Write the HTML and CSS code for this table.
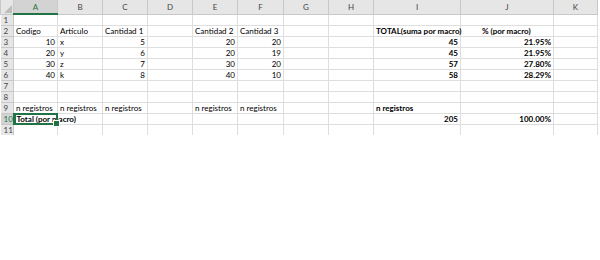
FILE: index.html
```html
<!DOCTYPE html>
<html lang="es">
<head>
    <meta charset="UTF-8">
    <title>Libro1 - Hoja1</title>
    <link rel="stylesheet" href="styles.css">
</head>
<body>

    <!-- Sheet grid -->
    <table class="sheet">
        <colgroup>
            <col class="c-head">
            <col class="c-44"><col class="c-45"><col class="c-45"><col class="c-45">
            <col class="c-45"><col class="c-46"><col class="c-45"><col class="c-45">
            <col class="c-87"><col class="c-93"><col class="c-44">
        </colgroup>
        <thead>
            <tr class="col-heads">
                <th class="corner"></th>
                <th class="active-col">A</th><th>B</th><th>C</th><th>D</th><th>E</th><th>F</th>
                <th>G</th><th>H</th><th>I</th><th>J</th><th>K</th>
            </tr>
        </thead>
        <tbody>
            <tr><th>1</th><td></td><td></td><td></td><td></td><td></td><td></td><td></td><td></td><td></td><td></td><td></td></tr>
            <tr><th>2</th><td>Codigo</td><td>Artículo</td><td>Cantidad 1</td><td></td><td>Cantidad 2</td><td>Cantidad 3</td><td></td><td></td><td class="b">TOTAL(suma por macro)</td><td class="b pct-head">% (por macro)</td><td></td></tr>
            <tr><th>3</th><td class="n">10</td><td>x</td><td class="n">5</td><td></td><td class="n">20</td><td class="n">20</td><td></td><td></td><td class="n b">45</td><td class="n b">21.95%</td><td></td></tr>
            <tr><th>4</th><td class="n">20</td><td>y</td><td class="n">6</td><td></td><td class="n">20</td><td class="n">19</td><td></td><td></td><td class="n b">45</td><td class="n b">21.95%</td><td></td></tr>
            <tr><th>5</th><td class="n">30</td><td>z</td><td class="n">7</td><td></td><td class="n">30</td><td class="n">20</td><td></td><td></td><td class="n b">57</td><td class="n b">27.80%</td><td></td></tr>
            <tr><th>6</th><td class="n">40</td><td>k</td><td class="n">8</td><td></td><td class="n">40</td><td class="n">10</td><td></td><td></td><td class="n b">58</td><td class="n b">28.29%</td><td></td></tr>
            <tr><th>7</th><td></td><td></td><td></td><td></td><td></td><td></td><td></td><td></td><td></td><td></td><td></td></tr>
            <tr><th>8</th><td></td><td></td><td></td><td></td><td></td><td></td><td></td><td></td><td></td><td></td><td></td></tr>
            <tr><th>9</th><td>n registros</td><td>n registros</td><td>n registros</td><td></td><td>n registros</td><td>n registros</td><td></td><td></td><td class="b">n registros</td><td></td><td></td></tr>
            <tr><th class="active-row">10</th><td class="b selected">Total (por macro)</td><td class="no-left"></td><td></td><td></td><td></td><td></td><td></td><td></td><td class="n b">205</td><td class="n b">100.00%</td><td></td></tr>
            <tr class="last"><th>11</th><td></td><td></td><td></td><td></td><td></td><td></td><td></td><td></td><td></td><td></td><td></td></tr>
        </tbody>
    </table>

</body>
</html>
```

FILE: styles.css
```css
/* General */
* { margin: 0; padding: 0; box-sizing: border-box; }
body { background: #fff; font-family: "Lato", "Liberation Sans", sans-serif; font-size: 8px; color: #000; }

/* Grid */
.sheet { border-collapse: collapse; table-layout: fixed; width: 597px; }
.c-head { width: 13px; }
.c-44 { width: 44px; }
.c-45 { width: 45px; }
.c-46 { width: 46px; }
.c-87 { width: 87px; }
.c-93 { width: 93px; }

.sheet td { height: 11px; padding: 0 2px; border: 1px solid #dedede; white-space: nowrap;
    overflow: visible; vertical-align: bottom; line-height: 10px; }
.sheet td.n { text-align: right; }
.sheet td.b { font-weight: bold; }
.sheet td.pct-head { padding-left: 21px; }
.sheet td.no-left { border-left-color: transparent; }

/* Row and column headings */
.sheet th { background: #e6e6e6; color: #444; font-weight: normal; font-size: 8px;
    border: 1px solid #c8c8c8; line-height: 10px; }
.col-heads th { height: 14px; vertical-align: middle; border-top: none; }
.sheet tbody th { text-align: left; padding-left: 3px; height: 11px; border-left: none; }
.sheet th.corner { position: relative; background: #e6e6e6; }
.sheet th.corner::after { content: ""; position: absolute; right: 1px; bottom: 1px;
    border-style: solid; border-width: 0 0 8px 8px; border-color: transparent transparent #bdbdbd transparent; }
.sheet th.active-col { background: #d3d3d3; color: #217346; border-bottom: 2px solid #217346; }
.sheet th.active-row { background: #d3d3d3; color: #217346; border-right: 2px solid #217346; }

/* Selected cell */
.sheet td.selected { position: relative; }
.sheet td.selected::before { content: ""; position: absolute; left: -1px; top: -1px; right: -1px; bottom: -1px;
    border: 2px solid #217346; }
.sheet td.selected::after { content: ""; position: absolute; right: -3px; bottom: -3px; width: 5px; height: 5px;
    background: #217346; border: 1px solid #fff; }

/* Sheet ends after row 11 */
.sheet tr.last td, .sheet tr.last th { border-bottom: none; }
```
